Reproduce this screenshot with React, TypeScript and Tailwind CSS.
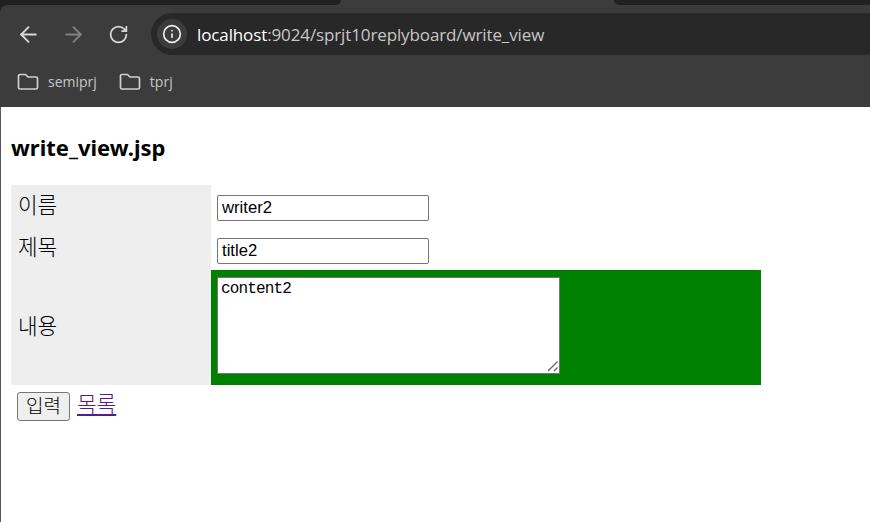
import { ArrowLeft, ArrowRight, RotateCw, Info } from 'lucide-react';

const rowLabel = 'w-[200px] bg-[#eeeeee] pl-[7px] text-left align-middle font-light';
const textInput =
  'box-border block h-[26px] w-[212px] rounded-[2px] border border-[#767676] bg-white px-[4px] text-[16.67px] text-black';

function BookmarkFolder() {
  return (
    <svg width="22" height="18" viewBox="0 0 22 18" fill="none" stroke="#d0d0d0" strokeWidth="1.7" strokeLinejoin="round" className="shrink-0">
      <path d="M1.5 3a1.5 1.5 0 0 1 1.5-1.5h5.5l2.5 2.5h8a1.5 1.5 0 0 1 1.5 1.5v9a1.5 1.5 0 0 1-1.5 1.5H3A1.5 1.5 0 0 1 1.5 14.5z" />
    </svg>
  );
}

export default function App() {
  return (
    <div className="flex h-[522px] w-[870px] flex-col overflow-hidden bg-[#202124] font-['Liberation_Sans','Noto_Sans_CJK_KR',sans-serif]">
      {/* tab strip */}
      <div className="flex h-[5px] shrink-0 bg-[#3c3c3c]">
        <div className="h-full w-[341px] rounded-br-[8px] bg-[#202221]" />
        <div className="w-[273px]" />
        <div className="h-full flex-1 rounded-bl-[8px] bg-[#202221]" />
      </div>

      {/* toolbar */}
      <div className="flex h-[102px] shrink-0 flex-col rounded-tl-[8px] bg-[#3c3c3c]">
        <div className="flex h-[50px] shrink-0 items-end">
          <div className="flex h-[42px] items-center">
            <ArrowLeft className="ml-[16px] h-[25px] w-[25px] text-[#d8d8d8]" strokeWidth={1.8} />
            <ArrowRight className="ml-[20px] h-[25px] w-[25px] text-[#808080]" strokeWidth={1.8} />
            <RotateCw className="ml-[22px] h-[21px] w-[21px] text-[#d8d8d8]" strokeWidth={2} />
          </div>
          <div className="ml-[22px] flex h-[42px] flex-1 items-center rounded-l-full bg-[#282828] pl-[6px]">
            <div className="flex h-[30px] w-[30px] items-center justify-center rounded-full bg-[#3c3c3c]">
              <Info className="h-[20px] w-[20px] text-[#eeeeee]" strokeWidth={2} />
            </div>
            <span className="ml-[10px] text-[17px] leading-none tracking-[-0.12px] text-[#c7c7c7] font-['Open_Sans',sans-serif]">
              <span className="text-white">localhost</span>:9024/sprjt10replyboard/write_view
            </span>
          </div>
        </div>
        <div className="flex flex-1 items-center pt-[1px] text-[14px] text-[#c7c7c7] font-['Open_Sans',sans-serif]">
          <div className="ml-[17px]"><BookmarkFolder /></div>
          <span className="ml-[9px]">semiprj</span>
          <div className="ml-[22px]"><BookmarkFolder /></div>
          <span className="ml-[9px]">tprj</span>
        </div>
      </div>

      {/* page */}
      <div className="flex-1 border-l border-[#555555] bg-white pl-[10px] text-[21.33px] text-black">
        <h3 className="mt-[26px] text-[22px] font-bold leading-[28px] font-['Noto_Sans','Noto_Sans_CJK_KR',sans-serif]">write_view.jsp</h3>
        <table className="mt-[24px] w-[750px] table-fixed border-collapse">
          <tbody>
            <tr className="h-[43px]">
              <th className={rowLabel}>이름</th>
              <td className="pl-[6px] pt-[10px] align-top">
                <input defaultValue="writer2" className={textInput} />
              </td>
            </tr>
            <tr className="h-[42px]">
              <th className={rowLabel}>제목</th>
              <td className="pl-[6px] pt-[10px] align-top">
                <input defaultValue="title2" className={textInput} />
              </td>
            </tr>
            <tr className="h-[115px]">
              <th className={rowLabel}>내용</th>
              <td className="bg-[#008000] pl-[6px] pt-[7px] align-top">
                <div className="relative h-[97px] w-[343px]">
                  <textarea
                    defaultValue="content2"
                    className="box-border block h-full w-full resize-none rounded-none border border-[#767676] bg-white px-[3px] py-[2px] text-[16px] leading-[18px] tracking-[-0.85px] text-black font-['Liberation_Mono','Noto_Sans_CJK_KR',monospace]"
                  />
                  <svg width="12" height="12" viewBox="0 0 12 12" stroke="#666666" strokeWidth="1.3" className="absolute bottom-[2px] right-[1px]">
                    <path d="M1 11 10.5 1.5M7 11l3.5-3.5" />
                  </svg>
                </div>
              </td>
            </tr>
          </tbody>
        </table>
        <div className="flex items-start pl-[6px] pt-[7px]">
          <button className="box-border h-[29px] w-[53px] rounded-[3px] border border-[#767676] bg-[#efefef] text-[19px] font-light leading-none text-black">입력</button>
          <a href="#" className="ml-[7px] text-[21.33px] font-light leading-[26px] text-[#551a8b] underline">목록</a>
        </div>
      </div>
    </div>
  );
}
